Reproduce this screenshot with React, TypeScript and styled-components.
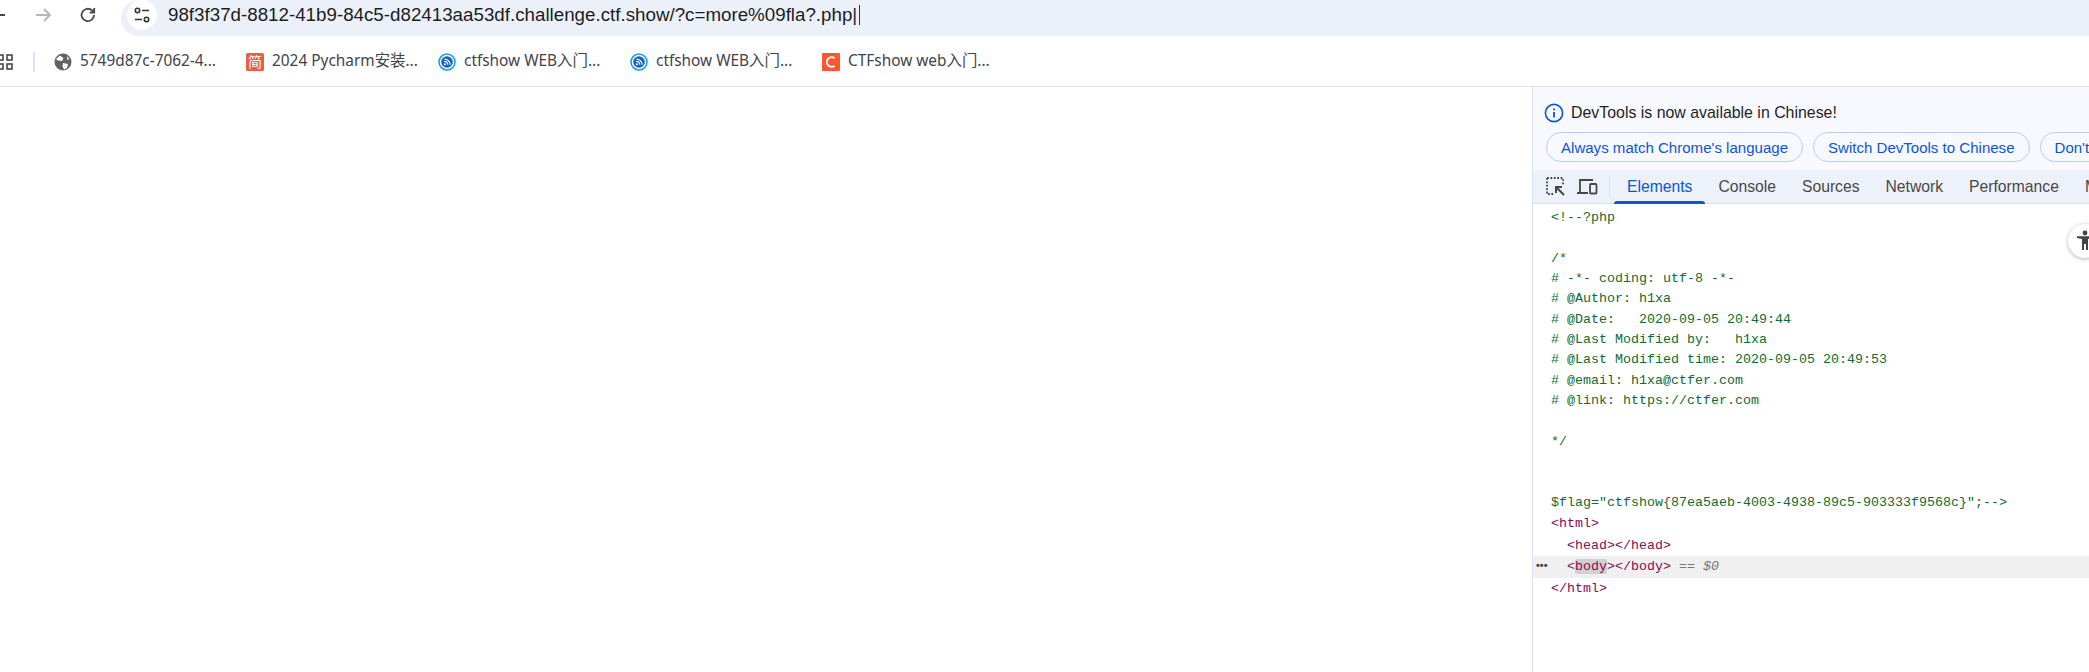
import React from 'react';
import styled, { createGlobalStyle } from 'styled-components';

const Global = createGlobalStyle`
  html, body {
    margin: 0;
    padding: 0;
    background: #fff;
    overflow: hidden;
  }
  * {
    box-sizing: border-box;
  }
`;

const uiFont = `"Noto Sans", "Noto Sans CJK SC", sans-serif`;
const arial = `"Liberation Sans", "Noto Sans CJK SC", sans-serif`;
const mono = `"Liberation Mono", monospace`;

const Page = styled.div`
  width: 2089px;
  height: 672px;
  display: flex;
  flex-direction: column;
  overflow: hidden;
`;

// Browser chrome
const Toolbar = styled.div`
  height: 36px;
  flex: none;
  display: flex;
  align-items: center;
  background: #fff;
`;

const NavIcon = styled.svg`
  width: 20px;
  height: 20px;
  flex: none;
  fill: none;
  stroke-width: 1.8;
  stroke: ${(p: { $muted?: boolean }) => (p.$muted ? '#b4b6b9' : '#474747')};
`;

const NavGroup = styled.div`
  width: 121px;
  flex: none;
  display: flex;
  align-items: center;
  margin-top: -6px;
  gap: 25px;
  svg:first-child {
    margin-left: -12px;
  }
`;

const Omnibox = styled.div`
  flex: 1;
  height: 36px;
  background: #ecf1f9;
  border-radius: 18px 0 0 18px;
  display: flex;
  align-items: flex-start;
  padding-left: 6px;
`;

const TuneButton = styled.div`
  width: 30px;
  height: 30px;
  border-radius: 50%;
  background: #fff;
  display: flex;
  align-items: center;
  justify-content: center;
  flex: none;
`;

const Url = styled.div`
  margin-left: 11px;
  font: 18.75px/30px ${arial};
  color: #1c1d1f;
  white-space: pre;
`;

const Caret = styled.span`
  display: inline-block;
  width: 1px;
  height: 20px;
  margin-left: 2px;
  background: #333;
  vertical-align: -4px;
`;

const BookmarkBar = styled.div`
  height: 51px;
  flex: none;
  display: flex;
  align-items: center;
  background: #fff;
  border-bottom: 1px solid #e3e4e6;
  padding-top: 1px;
`;

const AppsIcon = styled.svg`
  width: 16px;
  height: 16px;
  margin-left: -3px;
  flex: none;
  fill: none;
  stroke: #474747;
  stroke-width: 1.6;
`;

const BarDivider = styled.div`
  width: 2px;
  height: 20px;
  margin: 0 19px 0 20px;
  background: #d3e3fd;
  flex: none;
`;

const Bookmark = styled.div`
  width: ${(p: { $width: number }) => p.$width}px;
  flex: none;
  display: flex;
  align-items: center;
  gap: 8px;
  font: 15.4px/20px ${uiFont};
  color: #3f4449;
  white-space: nowrap;
  span {
    margin-top: -2px;
  }
`;

const Favicon = styled.svg`
  width: 18px;
  height: 18px;
  flex: none;
`;

const Body = styled.div`
  flex: 1;
  min-height: 0;
  display: flex;
`;

const Viewport = styled.div`
  flex: 1;
  background: #fff;
`;

// DevTools
const DevTools = styled.div`
  width: 557px;
  flex: none;
  position: relative;
  overflow: hidden;
  background: #fff;
  border-left: 1px solid #d6e2f5;
`;

const Infobar = styled.div`
  height: 83px;
  background: #f8f9fe;
  padding: 16px 0 0 11px;
`;

const InfoLine = styled.div`
  display: flex;
  align-items: center;
  gap: 7px;
  font: 15.9px/20px ${arial};
  color: #1f1f1f;
`;

const InfoButtons = styled.div`
  display: flex;
  gap: 10px;
  margin: 9px 0 0 2px;
  white-space: nowrap;
`;

const PillButton = styled.div`
  flex: none;
  height: 30px;
  padding: 0 14px;
  border: 1px solid #b5cdf2;
  border-radius: 15px;
  display: flex;
  align-items: center;
  font: 15.05px ${arial};
  color: #0b57d0;
`;

const TabBar = styled.div`
  height: 34px;
  background: #edf2fa;
  border-bottom: 1px solid #d6e2f5;
  display: flex;
  align-items: stretch;
  white-space: nowrap;
`;

const ToolIcons = styled.div`
  width: 81px;
  flex: none;
  display: flex;
  align-items: center;
  gap: 9px;
  padding-left: 12px;
  &::after {
    content: '';
    width: 1px;
    height: 20px;
    margin-left: 2px;
    background: #d6e2f5;
  }
`;

const ToolIcon = styled.svg`
  width: 22px;
  height: 22px;
  flex: none;
  fill: none;
  stroke: #474747;
`;

const Tab = styled.div<{ $active?: boolean }>`
  flex: none;
  padding: 0 13px;
  display: flex;
  align-items: center;
  position: relative;
  font: 15.7px ${arial};
  color: ${(p) => (p.$active ? '#0b57d0' : '#474747')};
  ${(p) =>
    p.$active
      ? `&::after {
    content: '';
    position: absolute;
    left: 0;
    right: 0;
    bottom: -1px;
    height: 3px;
    border-radius: 3px 3px 0 0;
    background: #0b57d0;
  }`
      : ''}
`;

const Tree = styled.div`
  padding-top: 4px;
  font: 13.33px ${mono};
`;

const CommentBlock = styled.pre`
  margin: 0;
  padding-left: 18px;
  font: inherit;
  line-height: 20.33px;
  color: #116b2e;
`;

const TreeRow = styled.div<{ $indent?: number; $selected?: boolean }>`
  height: 21.7px;
  line-height: 21.7px;
  padding-left: ${(p) => 18 + (p.$indent || 0) * 16}px;
  color: #8a0a52;
  white-space: pre;
  position: relative;
  background: ${(p) => (p.$selected ? '#f0f0f0' : 'transparent')};
`;

const RowDots = styled.span`
  position: absolute;
  left: 3px;
  top: 0;
  font: bold 11px/19px ${arial};
  color: #474747;
`;

const Highlight = styled.span`
  background: #d0d0d0;
  border-radius: 2px;
`;

const SelectedHint = styled.span`
  color: #777;
  font-style: italic;
`;

const A11yButton = styled.div`
  position: absolute;
  left: 535px;
  top: 137px;
  width: 34px;
  height: 34px;
  border-radius: 50%;
  background: #fff;
  box-shadow: 0 1px 4px rgba(0, 0, 0, 0.3);
  display: flex;
  align-items: center;
  padding-left: 8px;
`;

const code = `<!--?php

/*
# -*- coding: utf-8 -*-
# @Author: h1xa
# @Date:   2020-09-05 20:49:44
# @Last Modified by:   h1xa
# @Last Modified time: 2020-09-05 20:49:53
# @email: h1xa@ctfer.com
# @link: https://ctfer.com

*/


$flag="ctfshow{87ea5aeb-4003-4938-89c5-903333f9568c}";-->`;

function ReadFavicon() {
  return (
    <Favicon viewBox="0 0 18 18">
      <circle cx="9" cy="9" r="8" fill="#fff" stroke="#17a0ee" strokeWidth="1.6" />
      <circle cx="9" cy="9" r="5.8" fill="#1a62b8" />
      <circle cx="6.9" cy="11.2" r="1" fill="#fff" />
      <path d="M6.2 8.4a3.6 3.6 0 0 1 3.6 3.4M6.4 6a6 6 0 0 1 5.8 5.8" fill="none" stroke="#fff" strokeWidth="1.1" />
    </Favicon>
  );
}

const tabs = ['Console', 'Sources', 'Network', 'Performance', 'Memory'];

export default function App() {
  return (
    <Page>
      <Global />
      <Toolbar>
        <NavGroup>
          <NavIcon viewBox="0 0 20 20">
            <path d="M17 10H3M9 4l-6 6 6 6" />
          </NavIcon>
          <NavIcon viewBox="0 0 20 20" $muted>
            <path d="M3 10h14M11 4l6 6-6 6" />
          </NavIcon>
          <NavIcon viewBox="0 0 20 20">
            <path d="M16 10a6.2 6.2 0 1 1-1.9-4.5L16 7.4M16.2 3v4.6h-4.6" />
          </NavIcon>
        </NavGroup>
        <Omnibox>
          <TuneButton>
            <svg width="18" height="18" viewBox="0 0 18 18" fill="none" stroke="#333" strokeWidth="1.6">
              <circle cx="4.5" cy="4.5" r="2.2" />
              <path d="M9 4.5h7M2 13.5h7" />
              <circle cx="13.5" cy="13.5" r="2.2" />
            </svg>
          </TuneButton>
          <Url>
            98f3f37d-8812-41b9-84c5-d82413aa53df.challenge.ctf.show/?c=more%09fla?.php|
            <Caret />
          </Url>
        </Omnibox>
      </Toolbar>
      <BookmarkBar>
        <AppsIcon viewBox="0 0 16 16">
          <rect x="1" y="1" width="5" height="5" />
          <rect x="10" y="1" width="5" height="5" />
          <rect x="1" y="10" width="5" height="5" />
          <rect x="10" y="10" width="5" height="5" />
        </AppsIcon>
        <BarDivider />
        <Bookmark $width={192}>
          <Favicon viewBox="0 0 18 18">
            <circle cx="9" cy="9" r="8.5" fill="#5f6368" />
            <path d="M6 2.5 9.5 5 8 8 4 7.5 2 6ZM9 10l5 1-1 4-3 1.5-1.5-3ZM13 3l2.5 3-2 1Z" fill="#fff" />
          </Favicon>
          <span>5749d87c-7062-4...</span>
        </Bookmark>
        <Bookmark $width={192}>
          <Favicon viewBox="0 0 18 18">
            <rect width="18" height="18" rx="1.5" fill="#e8604a" />
            <text x="9" y="14" textAnchor="middle" fontSize="14" fill="#fff" fontFamily="Noto Sans CJK SC">简</text>
          </Favicon>
          <span>2024 Pycharm安装...</span>
        </Bookmark>
        <Bookmark $width={192}>
          <ReadFavicon />
          <span>ctfshow WEB入门...</span>
        </Bookmark>
        <Bookmark $width={192}>
          <ReadFavicon />
          <span>ctfshow WEB入门...</span>
        </Bookmark>
        <Bookmark $width={200}>
          <Favicon viewBox="0 0 18 18">
            <rect width="18" height="18" rx="1" fill="#fb5531" />
            <path d="M12.6 5.2a4.8 4.8 0 1 0 0 7.6" fill="none" stroke="#fff" strokeWidth="1.9" />
          </Favicon>
          <span>CTFshow web入门...</span>
        </Bookmark>
      </BookmarkBar>
      <Body>
        <Viewport />
        <DevTools>
          <Infobar>
            <InfoLine>
              <svg width="20" height="20" viewBox="0 0 20 20" fill="none" stroke="#0b57d0" strokeWidth="1.6">
                <circle cx="10" cy="10" r="8.6" />
                <path d="M10 9v5.5M10 5.4v1.8" strokeWidth="1.8" />
              </svg>
              DevTools is now available in Chinese!
            </InfoLine>
            <InfoButtons>
              <PillButton>Always match Chrome's language</PillButton>
              <PillButton>Switch DevTools to Chinese</PillButton>
              <PillButton>Don't show again</PillButton>
            </InfoButtons>
          </Infobar>
          <TabBar>
            <ToolIcons>
              <ToolIcon viewBox="0 0 22 22">
                <path d="M2 2h16v7M2 2v16h7" strokeWidth="1.8" strokeDasharray="1.8 1.6" />
                <path d="M19 19l-8-8M11 17v-6h6" strokeWidth="2" />
              </ToolIcon>
              <ToolIcon viewBox="0 0 22 22">
                <path d="M4 16V4h13M1 17h11" strokeWidth="1.8" />
                <rect x="14" y="8" width="6.5" height="9.5" rx="1" strokeWidth="1.8" />
              </ToolIcon>
            </ToolIcons>
            <Tab $active>Elements</Tab>
            {tabs.map((t) => (
              <Tab key={t}>{t}</Tab>
            ))}
          </TabBar>
          <Tree>
            <CommentBlock>{code}</CommentBlock>
            <TreeRow>{'<html>'}</TreeRow>
            <TreeRow $indent={1}>{'<head></head>'}</TreeRow>
            <TreeRow $indent={1} $selected>
              <RowDots>•••</RowDots>
              {'<'}
              <Highlight>body</Highlight>
              {'></body>'}
              <SelectedHint> == $0</SelectedHint>
            </TreeRow>
            <TreeRow>{'</html>'}</TreeRow>
          </Tree>
          <A11yButton>
            <svg width="18" height="22" viewBox="0 0 18 22" fill="#444">
              <circle cx="9" cy="3" r="2.4" />
              <path d="M1 6.2h16v1.8l-5 1V20h-2v-6H8v6H6V9L1 8Z" />
            </svg>
          </A11yButton>
        </DevTools>
      </Body>
    </Page>
  );
}
